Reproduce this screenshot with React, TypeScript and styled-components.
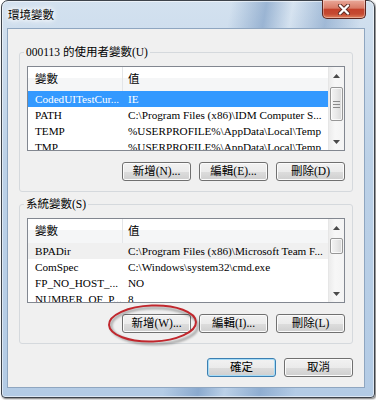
import React from "react";
import styled, { createGlobalStyle } from "styled-components";

const FONT = `"Liberation Serif", "Noto Sans CJK TC", serif`;

const Global = createGlobalStyle`
  html, body { margin: 0; padding: 0; background: #fff; }
  body { width: 376px; height: 400px; overflow: hidden; font-family: ${FONT}; }
`;

const Stage = styled.div`
  position: relative;
  width: 376px;
  height: 400px;
`;

const Window = styled.div`
  box-sizing: border-box;
  margin-left: 1px;
  width: 374px;
  height: 398px;
  border: 1px solid #3d434b;
  border-radius: 7px 7px 4px 4px;
  background:
    linear-gradient(100deg, rgba(255,255,255,0) 0 52%, rgba(88,128,178,.45) 60%, rgba(255,255,255,.1) 66%, rgba(88,128,178,.4) 74%, rgba(255,255,255,0) 82%),
    linear-gradient(180deg, #d3e1ef 0%, #bcd1e7 40%, #b3cbe5 100%);
  box-shadow: 1px 1px 2px rgba(0,0,0,.55), inset 0 0 0 1px rgba(255,255,255,.55);
  display: flex;
  flex-direction: column;
`;

const TitleBar = styled.div`
  height: 27px;
  display: flex;
  align-items: center;
  padding: 0 8px 0 6px;
`;

const Title = styled.div`
  flex: 1;
  font: 11.5px/14px ${FONT};
  color: #000;
  text-shadow: 0 0 4px #fff, 0 0 6px #fff, 0 0 8px #fff;
`;

const CloseBtn = styled.div`
  align-self: flex-start;
  margin-top: -1px;
  box-sizing: border-box;
  width: 44px;
  height: 19px;
  border: 1px solid #5b2620;
  border-top: none;
  border-radius: 0 0 5px 5px;
  background: linear-gradient(#eaa99a 0%, #d97b67 45%, #c4422c 52%, #c54a32 78%, #e0815d 100%);
  box-shadow: inset 0 0 0 1px rgba(255,255,255,.35);
  display: flex;
  align-items: center;
  justify-content: center;
`;

const Client = styled.div`
  box-sizing: border-box;
  margin-left: 5px;
  width: 358px;
  height: 360px;
  border: 1px solid #8fa6c0;
  background: #f0f0f0;
  padding: 16px 11px 0 11px;
  display: flex;
  flex-direction: column;
  gap: 5px;
`;

const Group = styled.fieldset`
  margin: 0;
  padding: 7px 7px 10px 7px;
  border: 1px solid #d5d9dd;
  border-radius: 3px;
  min-width: 0;
`;

const Legend = styled.legend`
  padding: 0 2px;
  margin-left: -3px;
  font: 11.5px/14px ${FONT};
  color: #000;
`;

const ListBox = styled.div`
  box-sizing: border-box;
  height: 85px;
  border: 1px solid #828790;
  background: #fff;
  display: grid;
  grid-template-columns: 1fr 16px;
  overflow: hidden;
`;

const Table = styled.div`
  overflow: hidden;
`;

const HeaderRow = styled.div`
  height: 24px;
  display: grid;
  grid-template-columns: 95px 1fr;
  background: linear-gradient(#ffffff 0 45%, #f5f6f7 45% 100%);
`;

const HeadCell = styled.div<{ $sep?: boolean }>`
  box-sizing: border-box;
  padding-left: ${(p) => (p.$sep ? 7 : 5)}px;
  border-right: ${(p) => (p.$sep ? "1px solid #e3e5e8" : "none")};
  font: 11.5px/24px ${FONT};
  color: #000;
`;

const Row = styled.div<{ $state?: "sel" | "dim" }>`
  height: 16px;
  display: grid;
  grid-template-columns: 95px 1fr;
  background: ${(p) => (p.$state === "sel" ? "#3399ff" : p.$state === "dim" ? "#f0f0f0" : "transparent")};
  color: ${(p) => (p.$state === "sel" ? "#fff" : "#000")};
`;

const Cell = styled.div<{ $first?: boolean }>`
  padding-left: ${(p) => (p.$first ? 7 : 5)}px;
  font: 11.2px/16px ${FONT};
  white-space: nowrap;
  overflow: hidden;
`;

const Scroll = styled.div`
  display: flex;
  flex-direction: column;
  background: linear-gradient(90deg, #ececec, #f7f7f7 40%, #f4f4f4);
  border-left: 1px solid #e6e6e6;
`;

const Arrow = styled.div`
  height: 17px;
  display: flex;
  align-items: center;
  justify-content: center;
`;

const Track = styled.div`
  flex: 1;
  padding: 0 1px;
`;

const Thumb = styled.div<{ $top: number; $h: number }>`
  box-sizing: border-box;
  margin-top: ${(p) => p.$top}px;
  height: ${(p) => p.$h}px;
  border: 1px solid #979797;
  border-radius: 2px;
  background: linear-gradient(90deg, #f4f4f4, #e8e8e8 50%, #d9d9d9);
  box-shadow: inset 0 0 0 1px rgba(255,255,255,.7);
  display: flex;
  align-items: center;
  justify-content: center;
`;

const ButtonRow = styled.div<{ $mt: number }>`
  margin-top: ${(p) => p.$mt}px;
  display: flex;
  justify-content: flex-end;
  gap: 8px;
`;

const Btn = styled.button<{ $default?: boolean }>`
  box-sizing: border-box;
  width: 69px;
  height: 19px;
  padding: 0;
  border: 1px solid ${(p) => (p.$default ? "#3c7fb1" : "#707070")};
  border-radius: 3px;
  background: linear-gradient(#f2f2f2 0%, #ebebeb 50%, #dddddd 51%, #cfcfcf 100%);
  box-shadow: inset 0 0 0 1px ${(p) => (p.$default ? "#a6dcf7" : "#fbfbfb")};
  font: 11.5px/17px ${FONT};
  color: #000;
`;

const Ellipse = styled.svg`
  position: absolute;
  left: 100px;
  top: 298px;
  width: 110px;
  height: 54px;
  overflow: visible;
`;

type R = { n: string; v: string; s?: "sel" | "dim" };

const userVars: R[] = [
  { n: "CodedUITestCur...", v: "IE", s: "sel" },
  { n: "PATH", v: "C:\\Program Files (x86)\\IDM Computer S..." },
  { n: "TEMP", v: "%USERPROFILE%\\AppData\\Local\\Temp" },
  { n: "TMP", v: "%USERPROFILE%\\AppData\\Local\\Temp" },
];

const sysVars: R[] = [
  { n: "BPADir", v: "C:\\Program Files (x86)\\Microsoft Team F...", s: "dim" },
  { n: "ComSpec", v: "C:\\Windows\\system32\\cmd.exe" },
  { n: "FP_NO_HOST_...", v: "NO" },
  { n: "NUMBER_OF_P...", v: "8" },
];

const Up = () => (
  <svg width="7" height="4" viewBox="0 0 7 4"><path d="M0 4 L3.5 0 L7 4 Z" fill="#4a4a4a" /></svg>
);
const Down = () => (
  <svg width="7" height="4" viewBox="0 0 7 4"><path d="M0 0 L3.5 4 L7 0 Z" fill="#4a4a4a" /></svg>
);
const Grip = () => (
  <svg width="7" height="7" viewBox="0 0 7 7">
    <path d="M0 0.5 H7 M0 3.5 H7 M0 6.5 H7" stroke="#8a8a8a" strokeWidth="1" />
  </svg>
);

function List({ rows, thumbTop, thumbH, grip }: { rows: R[]; thumbTop: number; thumbH: number; grip?: boolean }) {
  return (
    <ListBox>
      <Table>
        <HeaderRow>
          <HeadCell $sep>變數</HeadCell>
          <HeadCell>值</HeadCell>
        </HeaderRow>
        {rows.map((r) => (
          <Row key={r.n} $state={r.s}>
            <Cell $first>{r.n}</Cell>
            <Cell>{r.v}</Cell>
          </Row>
        ))}
      </Table>
      <Scroll>
        <Arrow><Up /></Arrow>
        <Track>
          <Thumb $top={thumbTop} $h={thumbH}>{grip && <Grip />}</Thumb>
        </Track>
        <Arrow><Down /></Arrow>
      </Scroll>
    </ListBox>
  );
}

export default function App() {
  return (
    <Stage>
      <Global />
      <Window>
        <TitleBar>
          <Title>環境變數</Title>
          <CloseBtn>
            <svg width="14" height="11" viewBox="0 0 14 11">
              <path d="M3 1.5 L11 9.5 M11 1.5 L3 9.5" stroke="#5a2a22" strokeWidth="4" strokeLinecap="round" />
              <path d="M3 1.5 L11 9.5 M11 1.5 L3 9.5" stroke="#fff" strokeWidth="2.4" strokeLinecap="round" />
            </svg>
          </CloseBtn>
        </TitleBar>
        <Client>
          <Group>
            <Legend>000113 的使用者變數(U)</Legend>
            <List rows={userVars} thumbTop={3} thumbH={34} grip />
            <ButtonRow $mt={11}>
              <Btn>新增(N)...</Btn>
              <Btn>編輯(E)...</Btn>
              <Btn>刪除(D)</Btn>
            </ButtonRow>
          </Group>
          <Group>
            <Legend>系統變數(S)</Legend>
            <List rows={sysVars} thumbTop={2} thumbH={16} />
            <ButtonRow $mt={11}>
              <Btn>新增(W)...</Btn>
              <Btn>編輯(I)...</Btn>
              <Btn>刪除(L)</Btn>
            </ButtonRow>
          </Group>
          <ButtonRow $mt={9}>
            <Btn $default>確定</Btn>
            <Btn>取消</Btn>
          </ButtonRow>
        </Client>
      </Window>
      <Ellipse viewBox="0 0 110 54">
        <defs>
          <filter id="sh" x="-20%" y="-40%" width="140%" height="180%">
            <feGaussianBlur stdDeviation="1.2" />
          </filter>
        </defs>
        <ellipse cx="54.5" cy="28" rx="43.5" ry="18" fill="none" stroke="rgba(0,0,0,.3)" strokeWidth="2.5" filter="url(#sh)" />
        <ellipse cx="52.5" cy="25.5" rx="43.5" ry="18" fill="none" stroke="#c1272d" strokeWidth="2" transform="rotate(-2 52.5 25.5)" />
      </Ellipse>
    </Stage>
  );
}
